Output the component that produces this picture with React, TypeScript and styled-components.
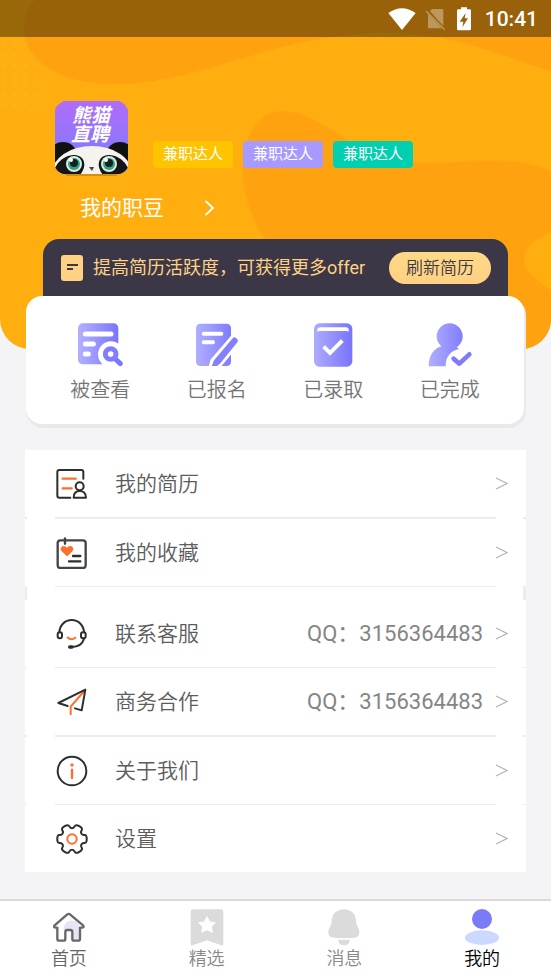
import React from "react";
import styled, { createGlobalStyle, css } from "styled-components";

const GlobalStyle = createGlobalStyle`
  *, *::before, *::after { box-sizing: border-box; }
  body {
    margin: 0;
    background: #f4f4f7;
    font-family: Roboto, "Noto Sans CJK SC", sans-serif;
  }
  button { font: inherit; border: 0; padding: 0; background: none; cursor: pointer; }
  a { color: inherit; text-decoration: none; }
  svg { display: block; flex: none; }
`;

const Page = styled.div`
  min-height: 100vh;
  display: flex;
  flex-direction: column;
  font-weight: 350;
`;

/* ---------- header ---------- */

const Header = styled.header`
  position: relative;
  isolation: isolate;
  overflow: hidden;
  padding-bottom: 53px;
  border-radius: 0 0 30px 30px;
  background: #ffae10;
`;

const Backdrop = styled.svg`
  position: absolute;
  inset: 0;
  width: 100%;
  height: 100%;
  z-index: -1;
`;

const StatusBar = styled.div`
  height: 37px;
  padding-right: 13px;
  display: flex;
  align-items: center;
  justify-content: flex-end;
  background: rgba(0, 0, 0, 0.4);
  color: #fff;
`;

const StatusIcons = styled.div`
  display: flex;
  align-items: center;
  gap: 9px;
  margin-right: 12px;
`;

const Clock = styled.time`
  font-size: 21px;
  font-weight: 500;
  line-height: 24px;
`;

const Profile = styled.section`
  display: flex;
  align-items: flex-end;
  gap: 24px;
  padding: 64px 55px 0;
`;

const AvatarSvg = styled.svg`
  overflow: visible;
`;

const Tags = styled.ul`
  display: flex;
  gap: 10px;
  margin: 0 0 9px;
  padding: 0;
  list-style: none;
`;

const Tag = styled.li<{ $color: string }>`
  padding: 0 10px;
  border-radius: 4px;
  background: ${(p) => p.$color};
  color: #fff;
  font-size: 15px;
  font-weight: 400;
  line-height: 27px;
  white-space: nowrap;
`;

const Points = styled.button`
  display: flex;
  align-items: center;
  gap: 40px;
  margin: 16px 0 16px 80px;
  color: #fff;
  font-size: 21px;
  font-weight: 400;
  line-height: 30px;
`;

const Banner = styled.section`
  display: flex;
  align-items: center;
  gap: 9px;
  height: 57px;
  margin: 0 43px;
  padding: 0 17px;
  border-radius: 16px 16px 0 0;
  background: #3b3747;
  color: #ffd286;
`;

const BannerText = styled.p`
  flex: 1;
  margin: 0;
  font-size: 18px;
  font-weight: 400;
  line-height: 28px;
  white-space: nowrap;
`;

const RefreshButton = styled.button`
  && {
    padding: 0 17px;
    border-radius: 16px;
    background: linear-gradient(#ffda85, #ffd084);
  }
  color: #3b3747;
  font-size: 17px;
  line-height: 32px;
  white-space: nowrap;
`;

/* ---------- quick actions ---------- */

const QuickCard = styled.nav`
  position: relative;
  display: flex;
  margin: -53px 27px 0 26px;
  padding: 25px 16px 20px;
  border-radius: 16px;
  background: #fff;
  box-shadow: 1px 3px 0 1px #e9e9eb;
`;

const QuickItem = styled.a`
  flex: 1;
  display: flex;
  flex-direction: column;
  align-items: center;
  gap: 7px;
  color: #757575;
  font-size: 20px;
  line-height: 28px;
`;

/* ---------- menu ---------- */

const Menu = styled.main`
  margin: 26px 25px;
`;

const MenuRow = styled.a`
  display: flex;
  align-items: center;
  height: 67px;
  padding: 0 18px 0 31px;
  background: #fff;
  color: #5c5c5c;
`;

const MenuLabel = styled.span`
  flex: 1;
  margin-left: 27px;
  font-size: 21px;
  line-height: 30px;
`;

const MenuValue = styled.span`
  margin-right: 12px;
  color: #858585;
  font-size: 22px;
  font-weight: 400;
  line-height: 30px;
`;

const edgeTicks = css`
  background: linear-gradient(
    to right,
    #ececee 2px,
    #fff 2px calc(100% - 3px),
    #ececee calc(100% - 3px)
  );
`;

const Divider = styled.div<{ $gap?: boolean }>`
  height: ${(p) => (p.$gap ? "14px" : "2px")};
  padding: 0 30px;
  ${edgeTicks}
  &::before {
    content: "";
    display: block;
    height: ${(p) => (p.$gap ? "1px" : "100%")};
    background: #ececee;
  }
`;

const ThinDivider = styled(Divider)`
  height: 1px;
`;

/* ---------- tab bar ---------- */

const TabBar = styled.nav`
  display: flex;
  margin-top: auto;
  padding: 6px 0 8px;
  border-top: 2px solid #dadadd;
  background: #fff;
`;

const Tab = styled.a<{ $color: string }>`
  flex: 1;
  display: flex;
  flex-direction: column;
  align-items: center;
  color: ${(p) => p.$color};
  font-size: 18px;
  line-height: 24px;
`;

/* ---------- drawings ---------- */

const HeaderArt = () => (
  <Backdrop viewBox="0 0 551 349" preserveAspectRatio="none" aria-hidden="true">
    <defs>
      <pattern id="dots" width="10" height="10" patternUnits="userSpaceOnUse">
        <circle cx="5" cy="5" r="2" fill="#ffb732" opacity="0.4" />
      </pattern>
    </defs>
    <path d="M0 37H40V110H0Z" fill="url(#dots)" />
    <path
      d="M35 0C20 16 20 42 36 58C60 84 110 90 165 79C235 65 290 37 370 33C450 30 500 56 551 71V0Z"
      fill="#ffa210"
    />
    <path
      d="M281 111C255 112 240 143 243 178C246 205 255 225 267 242C290 300 330 349 360 349H551V290C515 268 515 248 551 232V171C500 150 450 168 400 161C345 152 325 112 281 111Z"
      fill="#ffa210"
    />
  </Backdrop>
);

const WifiIcon = () => (
  <svg width="28" height="24" viewBox="53 18 84 72" aria-hidden="true">
    <path d="M54 36Q95 7 136 36L95 87Z" fill="#fff" />
  </svg>
);

const NoSimIcon = () => (
  <svg width="21" height="24" viewBox="163 19 63 72" aria-hidden="true">
    <path d="M184 25H214Q218 25 218 29V76L178 32ZM172 40L213 83H176Q172 83 172 79Z" fill="#fff" opacity="0.35" />
    <path d="M166 31L222 87" stroke="#fff" strokeWidth="4" opacity="0.35" />
  </svg>
);

const BatteryIcon = () => (
  <svg width="18" height="24" viewBox="261 20 54 72" aria-hidden="true">
    <path
      fillRule="evenodd"
      fill="#fff"
      d="M279 21H297V27H305Q309 27 309 31V86Q309 90 305 90H271Q267 90 267 86V31Q267 27 271 27H279ZM293 38L275 64H286L283 81L300 54H290Z"
    />
  </svg>
);

const AvatarArt = () => (
  <AvatarSvg width="74" height="76" viewBox="0 0 74 76" role="img" aria-label="熊猫直聘">
    <defs>
      <linearGradient id="avatarBg" x1="0" y1="0" x2="0" y2="1">
        <stop offset="0" stopColor="#b06cf8" />
        <stop offset="0.65" stopColor="#8a78fb" />
      </linearGradient>
      <clipPath id="avatarClip">
        <path d="M9 0H64Q67 1 69 3T73 9V66Q71 71 65 73H8Q2 71 0 66V9Q1 5 4 3T9 0Z" />
      </clipPath>
    </defs>
    <path d="M8 71H65L61 75H12Z" fill="#b97a18" opacity="0.6" />
    <g clipPath="url(#avatarClip)">
      <rect width="74" height="74" fill="url(#avatarBg)" />
      <ellipse cx="8" cy="52" rx="13" ry="11" fill="#111" />
      <ellipse cx="65" cy="52" rx="13" ry="11" fill="#111" />
      <ellipse cx="37" cy="72" rx="40" ry="27" fill="#f6f3ef" />
      <ellipse cx="14" cy="68" rx="17" ry="12" fill="#15151a" transform="rotate(-38 14 68)" />
      <ellipse cx="59" cy="68" rx="17" ry="12" fill="#15151a" transform="rotate(38 59 68)" />
      <circle cx="19" cy="63" r="8" fill="#d5efe0" />
      <circle cx="19" cy="63" r="6" fill="#3c9c84" />
      <circle cx="19" cy="62" r="4" fill="#13231f" />
      <circle cx="16" cy="59" r="2" fill="#fff" />
      <circle cx="54" cy="63" r="8" fill="#d5efe0" />
      <circle cx="54" cy="63" r="6" fill="#3c9c84" />
      <circle cx="54" cy="62" r="4" fill="#13231f" />
      <circle cx="51" cy="59" r="2" fill="#fff" />
      <path d="M34 66H39L37 70Z" fill="#444" />
    </g>
    <text
      fill="#fff"
      fontFamily='"Noto Sans CJK SC", sans-serif'
      fontSize="19"
      fontWeight="700"
      fontStyle="italic"
    >
      <tspan x="17" y="21">熊猫</tspan>
      <tspan x="16" y="40">直聘</tspan>
    </text>
  </AvatarSvg>
);

const NoteIcon = () => (
  <svg width="24" height="28" viewBox="0 0 24 28" aria-hidden="true">
    <rect x="1" y="1" width="22" height="26" rx="3" fill="#ffd286" />
    <path d="M7 11H18M7 15H13" stroke="#3b3747" strokeWidth="2" />
  </svg>
);

const PointsChevron = () => (
  <svg width="11" height="16" viewBox="0 0 11 16" aria-hidden="true">
    <path d="M1.500 1L9 8L1.500 15" fill="none" stroke="#fff" strokeWidth="1.800" />
  </svg>
);

const RowChevron = () => (
  <svg width="13" height="14" viewBox="0 0 13 14" aria-hidden="true">
    <path d="M1 1L12 6.500L1 12" fill="none" stroke="#b4b4b4" strokeWidth="1.200" />
  </svg>
);

const QuickSvg = ({ x, children }: { x: number; children: React.ReactNode }) => (
  <svg width="48" height="48" viewBox={`${x} 92 144 144`} fill="none" strokeLinecap="round" aria-hidden="true">
    <defs>
      <linearGradient id={`quick${x}`} gradientUnits="userSpaceOnUse" x1={x + 10} y1="0" x2={x + 126} y2="0">
        <stop offset="0" stopColor="#b0aeff" />
        <stop offset="1" stopColor="#7a76fc" />
      </linearGradient>
    </defs>
    {children}
  </svg>
);

const ViewedIcon = () => (
  <QuickSvg x={170}>
    <rect x="176" y="99" width="121" height="123" rx="14" fill="url(#quick170)" />
    <path d="M198 131H275M198 161H222M198 191H207" stroke="#fff" strokeWidth="15" />
    <circle cx="275" cy="192" r="39" fill="#fff" />
    <path d="M288 206L303 220" stroke="#7a76fc" strokeWidth="15" />
    <circle cx="274" cy="191" r="16" stroke="#817dfc" strokeWidth="15" />
  </QuickSvg>
);

const AppliedIcon = () => (
  <QuickSvg x={522}>
    <rect x="531" y="100" width="105" height="127" rx="13" fill="url(#quick522)" />
    <path d="M554 130H607M554 156H582" stroke="#fff" strokeWidth="12" />
    <path
      d="M641 144Q645 138 651 143L655 147Q659 151 655 156L600 222L577 232L583 212Z"
      fill="#fff"
      stroke="#fff"
      strokeWidth="18"
      strokeLinejoin="round"
    />
    <path d="M641 144Q645 138 651 143L655 147Q659 151 655 156L604 219L594 227H579L584 211Z" fill="#837ffd" />
  </QuickSvg>
);

const AdmittedIcon = () => (
  <QuickSvg x={104}>
    <rect x="119" y="99" width="115" height="130" rx="16" fill="url(#quick104)" />
    <path d="M129 124V119Q129 111 138 111H215Q223 111 223 119V124Q221 122 216 122H136Q131 122 129 124Z" fill="#fff" />
    <path d="M148 169L167 188L204 151" stroke="#fff" strokeWidth="12" strokeLinecap="butt" />
  </QuickSvg>
);

const DoneIcon = () => (
  <QuickSvg x={455}>
    <circle cx="526" cy="138" r="39" fill="url(#quick455)" />
    <path
      d="M463 228C463 194 480 172 504 167H542L554 176C530 180 513 200 514 228Z"
      fill="url(#quick455)"
    />
    <path d="M538 205L555 220L585 192" stroke="#7f7bfc" strokeWidth="14" strokeLinejoin="round" />
  </QuickSvg>
);

const LineSvg = ({ y, children }: { y: number; children: React.ReactNode }) => (
  <svg
    width="32"
    height="32"
    viewBox={`123 ${y} 96 96`}
    fill="none"
    stroke="#2e2e2e"
    strokeWidth="6"
    strokeLinecap="round"
    strokeLinejoin="round"
    aria-hidden="true"
  >
    {children}
  </svg>
);

const ORANGE = "#ff6e2b";

const ResumeIcon = () => (
  <LineSvg y={81}>
    <path d="M166 170H133Q127 170 127 164V93Q127 87 133 87H199Q205 87 205 93V113" />
    <path d="M143 113H182M143 142H170" stroke={ORANGE} strokeWidth="7" />
    <circle cx="194" cy="136" r="12" />
    <path d="M176 170C176 156 184 150 194 150S213 156 213 170Z" />
  </LineSvg>
);

const FavoriteIcon = () => (
  <LineSvg y={289}>
    <rect x="128" y="299" width="84" height="83" rx="8" stroke="#444" strokeWidth="7" />
    <path d="M150 293V309" stroke="#444" strokeWidth="7" />
    <path
      d="M156 345L140 330C134 322 144 313 153 320L156 323L159 320C168 313 178 322 172 330Z"
      fill={ORANGE}
      stroke={ORANGE}
      strokeWidth="3"
    />
    <path d="M174 346H196M162 362H196" strokeWidth="7" />
  </LineSvg>
);

const SupportIcon = () => (
  <LineSvg y={51}>
    <path d="M133 94C134 72 150 57 170 57S206 72 207 94" />
    <rect x="128" y="94" width="13" height="18" rx="6" />
    <rect x="198" y="94" width="14" height="18" rx="6" />
    <path d="M207 113C203 128 190 137 170 138" />
    <path d="M164 138H171" strokeWidth="10" />
    <path d="M158 110Q170 119 181 110" stroke={ORANGE} />
  </LineSvg>
);

const BusinessIcon = () => (
  <LineSvg y={255}>
    <path d="M205 273L167 317V340" stroke={ORANGE} />
    <path d="M158 315L130 306L211 266L200 328L180 322" />
  </LineSvg>
);

const AboutIcon = () => (
  <LineSvg y={464}>
    <circle cx="171" cy="512" r="43" />
    <circle cx="171" cy="494" r="5" fill={ORANGE} stroke="none" />
    <path d="M171 508V533" stroke={ORANGE} strokeWidth="7" />
  </LineSvg>
);

/* Six-toothed wheel, rounded by running quadratic curves through the edge midpoints. */
const gearPath = (cx: number, cy: number) => {
  const pts: [number, number][] = [];
  for (let k = 0; k < 6; k++) {
    for (const [offset, r] of [[-20, 33], [-16, 46], [16, 46], [20, 33]]) {
      const a = ((k * 60 + offset) * Math.PI) / 180;
      pts.push([cx + r * Math.cos(a), cy + r * Math.sin(a)]);
    }
  }
  const mid = (i: number) => {
    const [a, b] = [pts[i % pts.length], pts[(i + 1) % pts.length]];
    return `${((a[0] + b[0]) / 2).toFixed(1)} ${((a[1] + b[1]) / 2).toFixed(1)}`;
  };
  return (
    `M${mid(pts.length - 1)}` +
    pts.map((p, i) => `Q${p[0].toFixed(1)} ${p[1].toFixed(1)} ${mid(i)}`).join("") +
    "Z"
  );
};

const SettingsIcon = () => (
  <LineSvg y={669}>
    <path d={gearPath(171, 717)} />
    <circle cx="171" cy="717" r="14" stroke={ORANGE} />
  </LineSvg>
);

const TabSvg = ({ x, children }: { x: number; children: React.ReactNode }) => (
  <svg width="40" height="40" viewBox={`${x} 50 120 120`} aria-hidden="true">
    {children}
  </svg>
);

const HomeIcon = () => (
  <TabSvg x={146}>
    <path d="M190 118A25 25 0 0 1 236 102V148H218V118Z" fill="#e6e4f5" />
    <path
      d="M201 72Q205 69 209 72L249 106Q252 112 245 112H239V145Q239 151 233 151H222Q216 151 216 145V125Q216 119 210 119H201Q195 119 195 125V145Q195 151 189 151H177Q171 151 171 145V112H166Q159 112 162 106Z"
      fill="none"
      stroke="#686868"
      strokeWidth="7"
      strokeLinejoin="round"
    />
  </TabSvg>
);

const FeaturedIcon = () => (
  <TabSvg x={559}>
    <path d="M578 57H660Q668 57 668 65V161Q668 167 662 165L619 150L576 165Q570 167 570 161V65Q570 57 578 57Z" fill="#dbdbdb" />
    <path
      d="M619 79L627 95L644 97L632 109L635 126L619 118L603 126L606 109L594 97L611 95Z"
      fill="#fff"
      stroke="#fff"
      strokeWidth="3"
      strokeLinejoin="round"
    />
  </TabSvg>
);

const BellIcon = () => (
  <TabSvg x={146}>
    <path
      d="M206 57C184 57 169 72 169 92C169 108 159 112 159 126C159 139 168 143 182 143H230C244 143 252 139 252 126C252 112 242 108 242 92C242 72 228 57 206 57Z"
      fill="#dbdbdb"
    />
    <path d="M189 148H223C223 159 216 165 206 165S189 159 189 148Z" fill="#dbdbdb" />
  </TabSvg>
);

const MeIcon = () => (
  <TabSvg x={560}>
    <circle cx="620" cy="86" r="30" fill="#7b7bf8" />
    <ellipse cx="620" cy="142" rx="51" ry="22" fill="#cbd9ff" />
  </TabSvg>
);

/* ---------- data ---------- */

const tags = ["#ffc400", "#a899ff", "#00d0b0"];

const quickItems = [
  { label: "被查看", Icon: ViewedIcon },
  { label: "已报名", Icon: AppliedIcon },
  { label: "已录取", Icon: AdmittedIcon },
  { label: "已完成", Icon: DoneIcon },
];

const tabs = [
  { label: "首页", Icon: HomeIcon, color: "#666" },
  { label: "精选", Icon: FeaturedIcon, color: "#888" },
  { label: "消息", Icon: BellIcon, color: "#888" },
  { label: "我的", Icon: MeIcon, color: "#000" },
];

const Row = ({ Icon, label, value }: { Icon: React.FC; label: string; value?: string }) => (
  <MenuRow href="#">
    <Icon />
    <MenuLabel>{label}</MenuLabel>
    {value && <MenuValue>{value}</MenuValue>}
    <RowChevron />
  </MenuRow>
);

export default function App() {
  return (
    <>
      <GlobalStyle />
      <Page>
        <Header>
          <HeaderArt />
          <StatusBar>
            <StatusIcons>
              <WifiIcon />
              <NoSimIcon />
              <BatteryIcon />
            </StatusIcons>
            <Clock>10:41</Clock>
          </StatusBar>
          <Profile>
            <AvatarArt />
            <Tags>
              {tags.map((color) => (
                <Tag key={color} $color={color}>兼职达人</Tag>
              ))}
            </Tags>
          </Profile>
          <Points type="button">
            我的职豆
            <PointsChevron />
          </Points>
          <Banner>
            <NoteIcon />
            <BannerText>提高简历活跃度，可获得更多offer</BannerText>
            <RefreshButton type="button">刷新简历</RefreshButton>
          </Banner>
        </Header>

        <QuickCard>
          {quickItems.map(({ label, Icon }) => (
            <QuickItem key={label} href="#">
              <Icon />
              {label}
            </QuickItem>
          ))}
        </QuickCard>

        <Menu>
          <Row Icon={ResumeIcon} label="我的简历" />
          <Divider />
          <Row Icon={FavoriteIcon} label="我的收藏" />
          <Divider $gap />
          <Row Icon={SupportIcon} label="联系客服" value="QQ：3156364483" />
          <ThinDivider />
          <Row Icon={BusinessIcon} label="商务合作" value="QQ：3156364483" />
          <Divider />
          <Row Icon={AboutIcon} label="关于我们" />
          <ThinDivider />
          <Row Icon={SettingsIcon} label="设置" />
        </Menu>

        <TabBar>
          {tabs.map(({ label, Icon, color }) => (
            <Tab key={label} href="#" $color={color}>
              <Icon />
              {label}
            </Tab>
          ))}
        </TabBar>
      </Page>
    </>
  );
}
